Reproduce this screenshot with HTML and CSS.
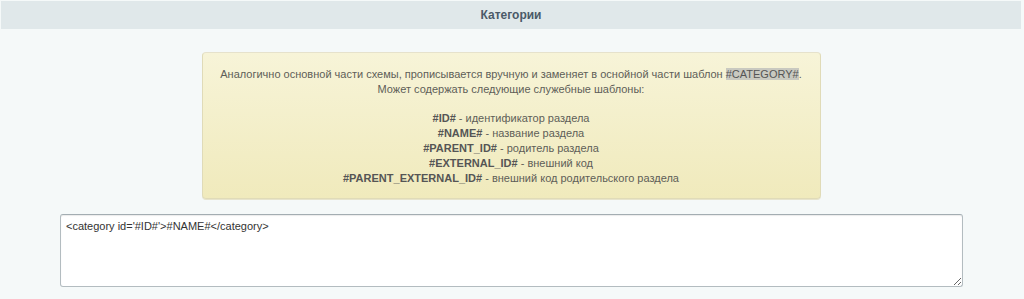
FILE: index.html
```html
<!DOCTYPE html>
<html lang="ru">
<head>
<meta charset="utf-8">
<link rel="stylesheet" href="styles.css">
</head>
<body>
<div class="page">
  <div class="heading">Категории</div>
  <div class="note-row">
    <div class="note">
      <p>Аналогично основной части схемы, прописывается вручную и заменяет в оснойной части шаблон <span class="hl">#CATEGORY#</span>.<br>Может содержать следующие служебные шаблоны:</p>
      <p class="gap"><b>#ID#</b> - идентификатор раздела<br><b>#NAME#</b> - название раздела<br><b>#PARENT_ID#</b> - родитель раздела<br><b>#EXTERNAL_ID#</b> - внешний код<br><b>#PARENT_EXTERNAL_ID#</b> - внешний код родительского раздела</p>
    </div>
  </div>
  <div class="field-row">
    <textarea class="field">&lt;category id='#ID#'&gt;#NAME#&lt;/category&gt;</textarea>
  </div>
</div>
</body>
</html>
```
FILE: styles.css
```css
html, body {
  margin: 0;
  padding: 0;
  background: #f5f9f9;
}
.page {
  font-family: "Liberation Sans", Arial, sans-serif;
  padding: 1px 3px 0 1px;
}
.heading {
  height: 28px;
  line-height: 29px;
  background: #e0e8ea;
  text-align: center;
  font-size: 12px;
  font-weight: bold;
  color: #4b5a68;
}
.note-row {
  display: flex;
  justify-content: center;
  padding: 23px 0 15px 0;
  margin-right: 1px;
}
.note {
  box-sizing: border-box;
  width: 619px;
  margin-left: 1px;
  height: 147px;
  padding: 14px 10px 0 10px;
  background: linear-gradient(to bottom, #f7f4d8, #f0eabc);
  border: 1px solid #e0dbb8;
  border-top-color: #e6e2cc;
  border-radius: 4px;
  box-shadow: 0 1px 0 #e7e4cc;
  text-align: center;
  font-size: 11px;
  line-height: 14.8px;
  color: #5e5e58;
}
.note p {
  margin: 0;
}
.note p.gap {
  margin-top: 14.8px;
}
.note b {
  color: #555;
}
.hl {
  background: #c9c9c0;
  color: #555;
}
.field-row {
  padding-left: 59px;
}
.field {
  display: block;
  box-sizing: border-box;
  width: 903px;
  height: 73px;
  margin: 0;
  padding: 4px 5px;
  border: 1px solid #b3bcc0;
  border-top-color: #a3adb2;
  border-radius: 3px;
  background: #fff;
  box-shadow: inset 0 1px 1px rgba(0,0,0,0.08);
  font-family: "Liberation Sans", Arial, sans-serif;
  font-size: 11px;
  line-height: 14px;
  color: #333;
  resize: both;
}
```
